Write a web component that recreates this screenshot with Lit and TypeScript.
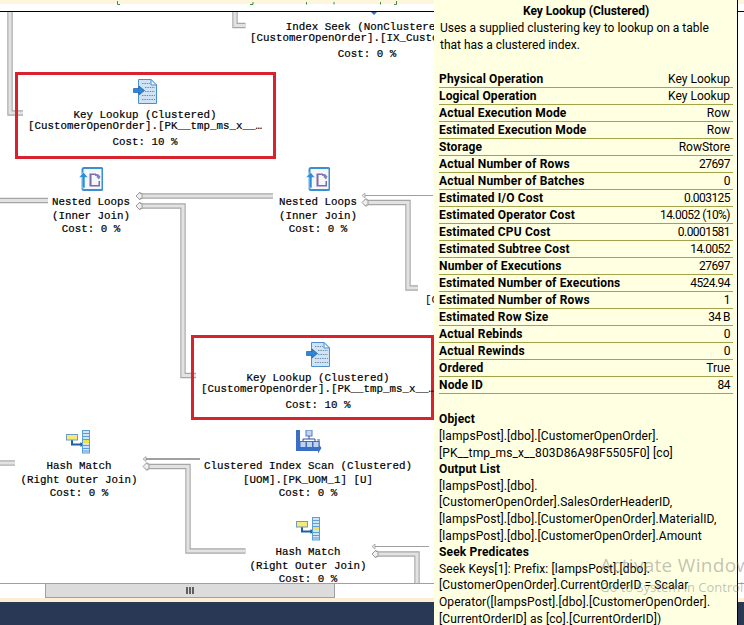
import { LitElement, html, css, svg } from "lit";
import { customElement } from "lit/decorators.js";

const CANVAS_TOP = 12;
const rows: [string, string][] = [
  ["Physical Operation", "Key Lookup"],
  ["Logical Operation", "Key Lookup"],
  ["Actual Execution Mode", "Row"],
  ["Estimated Execution Mode", "Row"],
  ["Storage", "RowStore"],
  ["Actual Number of Rows", "27697"],
  ["Actual Number of Batches", "0"],
  ["Estimated I/O Cost", "0.003125"],
  ["Estimated Operator Cost", "14.0052 (10%)"],
  ["Estimated CPU Cost", "0.0001581"],
  ["Estimated Subtree Cost", "14.0052"],
  ["Number of Executions", "27697"],
  ["Estimated Number of Executions", "4524.94"],
  ["Estimated Number of Rows", "1"],
  ["Estimated Row Size", "34 B"],
  ["Actual Rebinds", "0"],
  ["Actual Rewinds", "0"],
  ["Ordered", "True"],
  ["Node ID", "84"],
];

type IconKind = "lookup" | "loops" | "hash" | "scan";
interface PlanNode { x: number; y: number; icon?: IconKind; iconX?: number; iconY?: number; tight: boolean; lines: string[]; }

const nodes: PlanNode[] = [
  { x: 367, y: 22, tight: true, lines: ["Index Seek (NonClustered)", "[CustomerOpenOrder].[IX_CustomerOpe…", "Cost: 0 %"] },
  { x: 145, y: 110, icon: "lookup", iconX: 133, iconY: 79, tight: true, lines: ["Key Lookup (Clustered)", "[CustomerOpenOrder].[PK__tmp_ms_x__…", "Cost: 10 %"] },
  { x: 91, y: 196, icon: "loops", iconX: 79, iconY: 167, tight: false, lines: ["Nested Loops", "(Inner Join)", "Cost: 0 %"] },
  { x: 318, y: 196, icon: "loops", iconX: 306, iconY: 167, tight: false, lines: ["Nested Loops", "(Inner Join)", "Cost: 0 %"] },
  { x: 318, y: 373, icon: "lookup", iconX: 306, iconY: 342, tight: true, lines: ["Key Lookup (Clustered)", "[CustomerOpenOrder].[PK__tmp_ms_x__…", "Cost: 10 %"] },
  { x: 79, y: 460, icon: "hash", iconX: 66, iconY: 430, tight: false, lines: ["Hash Match", "(Right Outer Join)", "Cost: 0 %"] },
  { x: 308, y: 460, icon: "scan", iconX: 296, iconY: 430, tight: false, lines: ["Clustered Index Scan (Clustered)", "[UOM].[PK_UOM_1] [U]", "Cost: 0 %"] },
  { x: 308, y: 546, icon: "hash", iconX: 296, iconY: 517, tight: false, lines: ["Hash Match", "(Right Outer Join)", "Cost: 0 %"] },
];

const thick = [
  "M10 0 V101 H23",
  "M235 0 V13.5 H245.5",
  "M0 188.5 H48",
  "M273 184 H138",
  "M138 194 H183 V363.5 H196",
  "M364 190.5 H408 V276 H418",
  "M0 451 H15",
  "M145 454.5 H188 V539 H245.5",
  "M374 542 H417 V572",
];
const heads: [number, number][] = [[136, 184], [136, 194], [362, 190.5], [143, 454.5], [372, 542]];
const thin: [number, number, number][] = [[362, 433, 183.5], [143, 200, 447], [372, 429, 534.5]];

function connectors() {
  return svg`
    ${thick.map((d) => svg`<path d=${d} fill="none" stroke="#a6a6a6" stroke-width="5.4"/>`)}
    ${thick.map((d) => svg`<path d=${d} fill="none" stroke="#e2e2e2" stroke-width="3.2"/>`)}
    ${heads.map(([x, y]) => svg`<path d="M${x} ${y} L${x + 4} ${y - 4} V${y - 2.6} H${x + 6} V${y + 2.6} H${x + 4} V${y + 4} Z" fill="#efefef" stroke="#9a9a9a"/>`)}
    ${thin.map(([a, b, y]) => svg`
      <path d="M${a + 2} ${y} H${b}" stroke="#a0a0a0" stroke-width=${y === 447 ? 2 : 1}/>
      <path d="M${a} ${y} l3 -2.5 v5 z" fill="#e6e6e6" stroke="#9a9a9a" stroke-width=".7"/>`)}
  `;
}

function icon(kind: IconKind) {
  if (kind === "lookup") {
    return svg`<svg class="ico" width="24" height="25" viewBox="0 0 24 25">
      <path d="M5.5 .5 H18 L23.5 6 V24.5 H5.5 Z" fill="#cfe3f4" stroke="#4a90cf"/>
      <path d="M18 .5 V6 H23.5 Z" fill="#eef6fc" stroke="#4a90cf"/>
      <g stroke="#6d8aa6" stroke-width="1" stroke-dasharray="1.4 1">
        <path d="M9 4.5 H17"/><path d="M12 8.5 H22"/><path d="M12 12.5 H22"/><path d="M9 16.5 H22"/><path d="M9 20.5 H22"/>
      </g>
      <path d="M.5 9.5 H6 V7 L11.5 11.5 L6 16 V13.5 H.5 Z" fill="#2f86d6" stroke="#1f5fa8" stroke-width=".7"/>
    </svg>`;
  }
  if (kind === "loops") {
    return svg`<svg class="ico" width="24" height="24" viewBox="0 0 24 24">
      <rect x="3.5" y="1" width="20" height="22" rx="1.5" fill="#f4f7fb" stroke="#3a8fd0" stroke-width="2"/>
      <path d="M0 10.5 L4.5 5 L9 10.5 H6 V21 H3 V10.5 Z" fill="#2f8fdc" stroke="#fff" stroke-width=".5"/>
      <path d="M10.5 6.5 H17 V8 H12.5 V18 H19.5 V14 H21 V19.5 H10.5 Z" fill="#7b6ba6"/>
      <path d="M16 7 H19 L21.5 9.5 L20 12.5 L17.5 10 L18 9 H16 Z" fill="#8c7eb4"/>
    </svg>`;
  }
  if (kind === "hash") {
    return svg`<svg class="ico" width="24" height="24" viewBox="0 0 24 24">
      <path d="M6 9 V14.5 H16" fill="none" stroke="#1f5fa8" stroke-width="2"/>
      <path d="M14.5 12 L18 14.5 L14.5 17 Z" fill="#1f5fa8"/>
      <rect x=".5" y="4.5" width="11" height="5.5" fill="#f3e97c" stroke="#6f9bbd"/>
      <rect x="16.5" y=".5" width="7" height="22.5" fill="#cfe5f6" stroke="#5c9fd4"/>
      <path d="M17 3.5 H23 M17 6.5 H23 M17 9.5 H23 M17 12.5 H23 M17 15.5 H23 M17 18.5 H23 M17 21 H23" stroke="#5c9fd4"/>
      <rect x="17" y="10" width="6" height="3" fill="#e9e34c"/>
    </svg>`;
  }
  return svg`<svg class="ico" width="26" height="24" viewBox="0 0 26 24">
    <path d="M0 0 H4 V17 H21 V21 H0 Z" fill="#3a6fc4"/>
    <path d="M21 17 H23 V14.5 L25.5 18 L22 23.5 V21 H21 Z" fill="#3a6fc4"/>
    <path d="M21 9 H24 V15 H22.5 Z" fill="#8faedd"/>
    <rect x="10" y="0" width="6" height="6" fill="#c3d4ef" stroke="#4f7cc8"/>
    <path d="M13 6 V9 M7 12 V9 H19 V12" fill="none" stroke="#2d4f92"/>
    <rect x="4" y="11.5" width="6" height="6" fill="#bfd2f0" stroke="#3a6fc4"/>
    <rect x="10.5" y="11.5" width="6" height="6" fill="#bfd2f0" stroke="#3a6fc4"/>
    <rect x="17" y="11.5" width="6" height="6" fill="#bfd2f0" stroke="#3a6fc4"/>
  </svg>`;
}

@customElement("app-root")
export class AppRoot extends LitElement {
  static styles = css`
    :host { display: block; width: 744px; height: 625px; overflow: hidden; position: relative; background: #fff; }
    .page { display: flex; flex-direction: column; width: 744px; height: 625px; }
    .topbar { flex: none; height: 11px; box-sizing: content-box; border-bottom: 1px solid #000; background: linear-gradient(#fdf6dc 0 4px, #fff 4px); position: relative; }
    .topbar svg { display: block; }
    .canvas { flex: 1; position: relative; overflow: hidden; background: #fff; }
    .wires { position: absolute; left: 0; top: 0; }
    .box { position: absolute; box-sizing: border-box; border: 3px solid #d8222e; }
    .box.a { left: 15px; top: 60px; width: 261px; height: 87px; }
    .box.b { left: 191px; top: 323px; width: 243px; height: 85px; }
    .ico { position: absolute; display: block; }
    .node { position: absolute; transform: translateX(-50%); font: 10.83px/11px "Liberation Mono", monospace; color: #000; white-space: pre; text-align: center; -webkit-text-stroke: .2px #000; }
    .node div { height: 11px; }
    .tight div:last-child { margin-top: 5px; }
    .loose div { height: 13.5px; line-height: 13.5px; }
    .stray { position: absolute; left: 425px; top: 283px; font: 10.83px/11px "Liberation Mono", monospace; color: #000; white-space: pre; }
    .scroll { flex: none; height: 14px; border-top: 1px solid #a0a0a0; background: #fff; display: flex; padding-left: 45px; }
    .thumb { width: 290px; box-sizing: border-box; background: #dcdcdc; border: 1px solid #a0a0a0; display: flex; align-items: center; justify-content: center; gap: 1px; border-top: none; }
    .thumb i { width: 2px; height: 7px; background: #606060; display: block; }
    .cream { flex: none; height: 4px; background: #fdf0d2; }
    .navy { flex: none; height: 23px; background: #293955; }
    .tip { position: absolute; left: 434px; top: 0; width: 304px; height: 625px; box-sizing: border-box; background: #ffffe1; border-right: 1px solid #000; color: #000; font: 12px/17px Roboto, "Open Sans", sans-serif; padding: 3px 4px 0 5px; overflow: hidden; }
    .tip h1 { margin: 0; font: inherit; font-weight: 700; text-align: center; height: 17px; }
    .desc { height: 51px; padding-left: 1px; }
    .row { display: flex; justify-content: space-between; height: 16px; line-height: 16px; border-bottom: 1px solid #a3a34a; padding: 0 3px 0 0; }
    .row b, .sec b { font-weight: 700; letter-spacing: .16px; }
    .row .num { letter-spacing: -.55px; }
    .sec { margin-top: 17.4px; line-height: 16.6px; width: 292px; letter-spacing: .1px; }
    .sec b { display: block; }
    .water { position: absolute; left: 600px; top: 552px; width: 300px; color: rgba(120,120,120,.45); font-family: "Open Sans", sans-serif; white-space: nowrap; pointer-events: none; }
    .water .big { font-size: 19px; line-height: 26px; letter-spacing: .3px; }
    .water .small { font-size: 13px; line-height: 18px; }
  `;

  render() {
    return html`
      <div class="page">
        <div class="topbar">
          <svg width="744" height="11">
            <g stroke="#3f8f3f" fill="none">
              <path d="M117.5 1 V4.5 H120"/><path d="M250 4.5 H253 V2"/><path d="M306.5 2 V4.5"/><path d="M334 4.5 V2"/><path d="M380.5 2 V4.5"/><path d="M396.5 1 V4.5 H394"/>
            </g>
          </svg>
        </div>
        <div class="canvas">
          <svg class="wires" width="434" height="572">${connectors()}<path d="M371 0 H377 L374 3 Z" fill="#3f6fb5"/></svg>
          <div class="box a"></div>
          <div class="box b"></div>
          ${nodes.map((n) => html`
            ${n.icon ? html`<div style="position:absolute;left:${n.iconX}px;top:${(n.iconY ?? 0) - CANVAS_TOP}px">${icon(n.icon)}</div>` : null}
            <div class="node ${n.tight ? "tight" : "loose"}" style="left:${n.x}px;top:${n.y - CANVAS_TOP}px">${n.lines.map((l) => html`<div>${l}</div>`)}</div>
          `)}
          <div class="stray">[C</div>
        </div>
        <div class="scroll"><div class="thumb"><i></i><i></i><i></i></div></div>
        <div class="cream"></div>
        <div class="navy"></div>
      </div>
      <div class="tip">
        <h1>Key Lookup (Clustered)</h1>
        <div class="desc">Uses a supplied clustering key to lookup on a table<br />that has a clustered index.</div>
        ${rows.map(([k, v]) => html`<div class="row"><b>${k}</b><span class=${/^\d/.test(v) ? "num" : ""}>${v}</span></div>`)}
        <div class="sec">
          <b>Object</b>
          [lampsPost].[dbo].[CustomerOpenOrder].<br />[PK__tmp_ms_x__803D86A98F5505F0] [co]
          <b>Output List</b>
          [lampsPost].[dbo].<br />[CustomerOpenOrder].SalesOrderHeaderID,<br />[lampsPost].[dbo].[CustomerOpenOrder].MaterialID,<br />[lampsPost].[dbo].[CustomerOpenOrder].Amount
          <b>Seek Predicates</b>
          Seek Keys[1]: Prefix: [lampsPost].[dbo].<br />[CustomerOpenOrder].CurrentOrderID = Scalar<br />Operator([lampsPost].[dbo].[CustomerOpenOrder].<br />[CurrentOrderID] as [co].[CurrentOrderID])
        </div>
      </div>
      <div class="water">
        <div class="big">Activate Windows</div>
        <div class="small">Go to System in Control Panel to activate Windows.</div>
      </div>
    `;
  }
}
